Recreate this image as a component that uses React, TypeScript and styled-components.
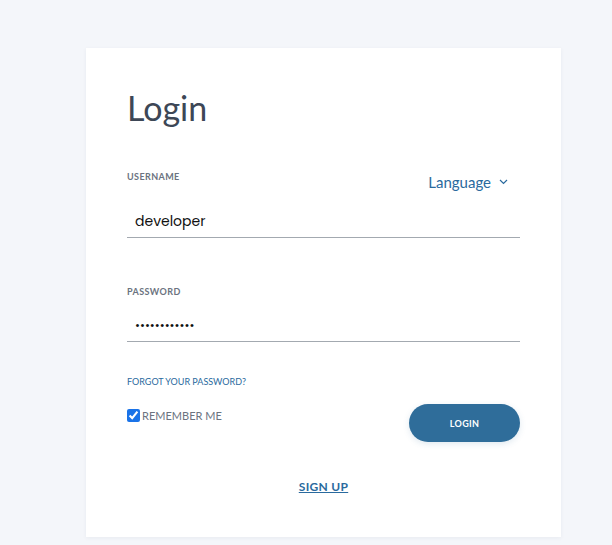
import React from "react";
import styled, { createGlobalStyle } from "styled-components";

const Global = createGlobalStyle`
  html, body { margin: 0; padding: 0; background: #f4f6fa; }
  body { font-family: Lato, "Open Sans", sans-serif; }
  * { box-sizing: border-box; }
`;

const Page = styled.div`
  width: 612px;
  height: 545px;
  padding: 48px 0 0 86px;
  background: #f4f6fa;
  overflow: hidden;
`;

const Card = styled.div`
  width: 475px;
  height: 489px;
  background: #fff;
  box-shadow: 0 1px 4px rgba(40, 50, 80, 0.06);
  padding: 40px 41px 0 41px;
  display: flex;
  flex-direction: column;
`;

const Title = styled.h1`
  margin: 0;
  font-family: Lato, sans-serif;
  font-weight: 400;
  font-size: 34px;
  line-height: 40px;
  color: #3d4756;
`;

const LabelRow = styled.div<{ $top: number }>`
  display: flex;
  justify-content: space-between;
  align-items: flex-start;
  margin-top: ${(p) => p.$top}px;
`;

const Label = styled.label`
  font-family: Lato, sans-serif;
  font-size: 9px;
  font-weight: 700;
  letter-spacing: 0.4px;
  color: #6b7380;
  line-height: 12px;
`;

const LangButton = styled.button`
  border: none;
  background: none;
  padding: 0;
  margin: 2px 12px 0 0;
  display: flex;
  align-items: center;
  gap: 8px;
  font-family: Lato, sans-serif;
  font-size: 15px;
  color: #2a6a9e;
  cursor: pointer;
`;

const Input = styled.input<{ $h: number; $pt: number; $mt: number; $fs: number }>`
  width: 100%;
  border: none;
  border-bottom: 1px solid #a3a9b0;
  outline: none;
  background: transparent;
  padding: ${(p) => p.$pt}px 0 0 8px;
  height: ${(p) => p.$h}px;
  margin-top: ${(p) => p.$mt}px;
  font-family: Poppins, Inter, sans-serif;
  font-size: ${(p) => p.$fs}px;
  color: #111;
`;

const Forgot = styled.a`
  margin-top: 34px;
  font-family: Lato, sans-serif;
  font-size: 9px;
  color: #2a6a9e;
  text-decoration: none;
  line-height: 12px;
`;

const ActionRow = styled.div`
  display: flex;
  justify-content: space-between;
  align-items: flex-start;
  margin-top: 16px;
`;

const Remember = styled.label`
  display: flex;
  align-items: center;
  gap: 2px;
  font-family: Lato, sans-serif;
  font-size: 11px;
  color: #6b7380;
  margin-top: 5px;
  input {
    margin: 0;
    width: 13px;
    height: 13px;
    accent-color: #1a73e8;
  }
`;

const LoginButton = styled.button`
  width: 111px;
  height: 38px;
  border: none;
  border-radius: 19px;
  background: #2f6d9a;
  color: #fff;
  font-family: Lato, sans-serif;
  font-weight: 700;
  font-size: 9px;
  letter-spacing: 0.3px;
  box-shadow: 0 2px 6px rgba(47, 109, 154, 0.15);
  cursor: pointer;
`;

const SignUp = styled.a`
  align-self: center;
  margin-top: 37px;
  font-family: Lato, sans-serif;
  font-size: 12px;
  font-weight: 700;
  color: #2a6a9e;
  text-decoration: underline;
  letter-spacing: 0.3px;
`;

function Chevron() {
  return (
    <svg width="9" height="6" viewBox="0 0 9 6" fill="none">
      <path d="M1 1l3.5 3.5L8 1" stroke="#2a6a9e" strokeWidth="1.2" />
    </svg>
  );
}

export default function App() {
  return (
    <>
      <Global />
      <Page>
        <Card>
          <Title>Login</Title>
          <LabelRow $top={43}>
            <Label>USERNAME</Label>
            <LangButton>
              <span>Language</span>
              <Chevron />
            </LangButton>
          </LabelRow>
          <Input $h={47} $pt={14} $mt={0} $fs={14} defaultValue="developer" />
          <LabelRow $top={48}>
            <Label>PASSWORD</Label>
          </LabelRow>
          <Input $h={37} $pt={5} $mt={7} $fs={12} type="password" defaultValue="developer123" />
          <Forgot>FORGOT YOUR PASSWORD?</Forgot>
          <ActionRow>
            <Remember>
              <input type="checkbox" defaultChecked />
              REMEMBER ME
            </Remember>
            <LoginButton>LOGIN</LoginButton>
          </ActionRow>
          <SignUp>SIGN UP</SignUp>
        </Card>
      </Page>
    </>
  );
}
